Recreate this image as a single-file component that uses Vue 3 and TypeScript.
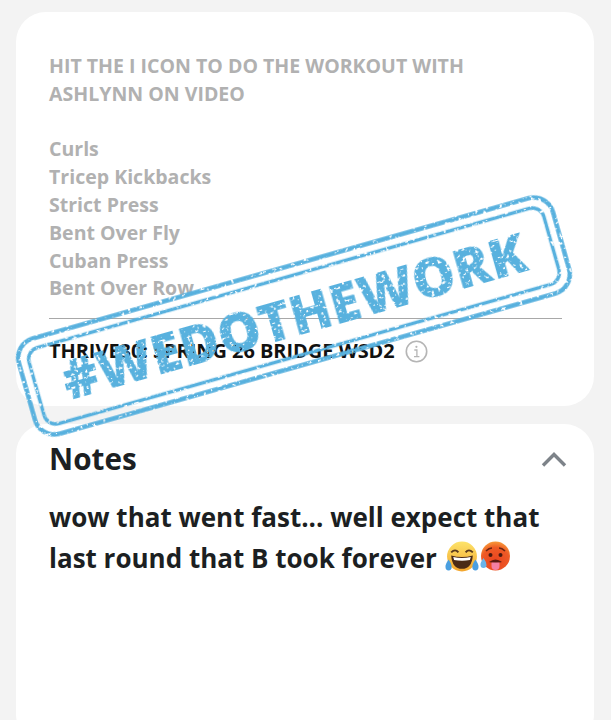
<template>
  <div class="page">
    <section class="card workout">
      <div class="desc">
        <div class="line">HIT THE I ICON TO DO THE WORKOUT WITH</div>
        <div class="line">ASHLYNN ON VIDEO</div>
        <div class="line">&nbsp;</div>
        <div v-for="move in moves" :key="move" class="line">{{ move }}</div>
      </div>
      <div class="divider"></div>
      <div class="title-row">
        <span class="title">THRIVE30: SPRING 26 BRIDGE WSD2</span>
        <svg class="info" width="23" height="23" viewBox="0 0 23 23">
          <circle cx="11.5" cy="11.5" r="10.2" fill="none" stroke="#b5b5b5" stroke-width="1.6" />
          <path d="M9.3 10h2.6v6.4M9 16.6h5.4" fill="none" stroke="#b5b5b5" stroke-width="1.3" />
          <circle cx="11.4" cy="6.8" r="1.1" fill="#b5b5b5" />
        </svg>
      </div>
    </section>

    <section class="card notes">
      <div class="notes-head">
        <span class="notes-title">Notes</span>
        <svg class="chevron" width="26" height="16" viewBox="0 0 26 16">
          <path d="M2 14.500 13 3.500 24 14.500" fill="none" stroke="#7d8389" stroke-width="3.400" />
        </svg>
      </div>
      <div class="notes-body">
        wow that went fast... well expect that<br />
        last round that B took forever
        <span class="emojis">
          <svg width="34" height="32" viewBox="0 0 33 31">
            <defs>
              <linearGradient id="laugh" x1="0" y1="0" x2="0" y2="1">
                <stop offset="0" stop-color="#fde36a" />
                <stop offset="1" stop-color="#f3a52c" />
              </linearGradient>
            </defs>
            <circle cx="16.500" cy="15" r="14.500" fill="url(#laugh)" />
            <path d="M6 11q4-4 7 0M20 11q3-4 7 0" fill="none" stroke="#5b3a1c" stroke-width="1.800" />
            <path d="M6 14q10.500 3 21 0q-1 13-10.500 13T6 14Z" fill="#4a2a16" />
            <path d="M8 15.500q8.500 2 17 0l-.8 3q-7.700 1.500-15.400 0Z" fill="#fff" />
            <path d="M3.500 18q-3.500 5-3 7.500a3 3 0 0 0 6 0q0-3-3-7.500ZM29.500 18q3.500 5 3 7.500a3 3 0 0 1-6 0q0-3 3-7.500Z" fill="#4a9fe0" />
          </svg>
          <svg width="32" height="31" viewBox="0 0 32 31">
            <defs>
              <radialGradient id="hot" cx="0.5" cy="0.7" r="0.7">
                <stop offset="0" stop-color="#e8431f" />
                <stop offset="0.7" stop-color="#ee5a26" />
                <stop offset="1" stop-color="#f79a3a" />
              </radialGradient>
            </defs>
            <circle cx="16.500" cy="15" r="14.500" fill="url(#hot)" />
            <path d="M7 10q3-3 6-3M20 7q3 0 6 3" fill="none" stroke="#6a2412" stroke-width="1.600" />
            <circle cx="11.500" cy="14" r="2" fill="#4a1a10" />
            <circle cx="21.500" cy="14" r="2" fill="#4a1a10" />
            <path d="M10 21q6.500-5 13 0q-6.500 2-13 0Z" fill="#5a1a12" />
            <path d="M12.500 21.500h8v3.500a4 4 0 0 1-8 0Z" fill="#f47fa4" />
            <path d="M4.500 17q-3.500 5-3 7a3 3 0 0 0 6 0q0-3-3-7Z" fill="#6bb4ea" />
          </svg>
        </span>
      </div>
    </section>

    <svg class="stamp" width="611" height="460" viewBox="0 0 611 460">
      <defs>
        <filter id="worn" x="-5%" y="-5%" width="110%" height="110%">
          <feTurbulence type="fractalNoise" baseFrequency="0.28 0.34" numOctaves="3" seed="7" result="noise" />
          <feColorMatrix in="noise" type="matrix" values="0 0 0 0 0  0 0 0 0 0  0 0 0 0 0  0 0 0 -14 9.900" result="holes" />
          <feComposite in="SourceGraphic" in2="holes" operator="in" />
        </filter>
      </defs>
      <g transform="rotate(-15.8 294 316)" filter="url(#worn)">
        <rect x="16.500" y="266.500" width="555" height="99" rx="20" fill="none" stroke="#58b1de" stroke-width="4.500" />
        <rect x="26.500" y="276.500" width="535" height="79" rx="12" fill="none" stroke="#58b1de" stroke-width="3.500" />
        <text x="294" y="336" text-anchor="middle" class="stamp-text">#WEDOTHEWORK</text>
      </g>
    </svg>
  </div>
</template>

<script setup lang="ts">
const moves: string[] = [
  'Curls',
  'Tricep Kickbacks',
  'Strict Press',
  'Bent Over Fly',
  'Cuban Press',
  'Bent Over Row',
]
</script>

<style>
html,
body {
  margin: 0;
  background: #f3f3f3;
}
</style>

<style scoped>
.page {
  position: relative;
  height: 720px;
  overflow: hidden;
  padding: 12px 17px 0 16px;
  box-sizing: border-box;
  font-family: "Open Sans", sans-serif;
  font-weight: 700;
}

.card {
  background: #fff;
  border-radius: 30px;
  padding: 0 32px 0 33px;
}

.workout {
  height: 394px;
  box-sizing: border-box;
  padding-top: 40px;
}

.desc {
  font-size: 19.550px;
  line-height: 27.800px;
  color: #b1b1b1;
}

.line {
  white-space: nowrap;
}

.divider {
  height: 1px;
  background: #a8a8a8;
  margin-top: 16px;
}

.title-row {
  display: flex;
  align-items: center;
  gap: 10px;
  margin-top: 18px;
}

.title {
  font-size: 19.900px;
  line-height: 28px;
  color: #111;
  white-space: nowrap;
}

.info {
  flex: none;
}

.notes {
  height: 320px;
  margin-top: 18px;
}

.notes-head {
  display: flex;
  justify-content: space-between;
  align-items: center;
  padding-top: 15px;
}

.notes-title {
  font-size: 29.700px;
  line-height: 40px;
  color: #1c1f22;
}

.chevron {
  margin-right: -5px;
}

.notes-body {
  margin-top: 17.500px;
  font-size: 26px;
  line-height: 41px;
  color: #1c1f22;
  white-space: nowrap;
}

.emojis {
  display: inline-flex;
  margin-left: 1px;
  vertical-align: -5px;
}

.stamp {
  position: absolute;
  top: 0;
  left: 0;
  pointer-events: none;
}

.stamp-text {
  font-family: "Open Sans", sans-serif;
  font-weight: 800;
  font-size: 54px;
  fill: #58b1de;
}
</style>
